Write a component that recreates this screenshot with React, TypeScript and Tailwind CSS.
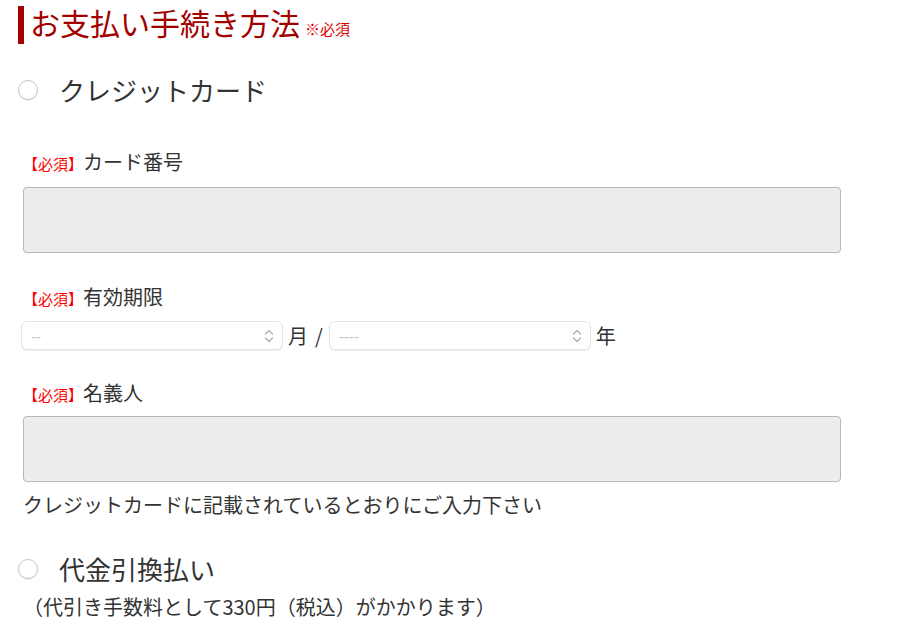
import React from 'react';

const jp = { fontFamily: '"Noto Sans CJK JP", "Noto Sans", sans-serif' };

function Radio({ label }: { label: string }) {
  return (
    <label className="flex h-[40px] items-center pl-[18px]">
      <span className="h-[20px] w-[20px] rounded-full border border-[#c6c6c6] bg-white shadow-[0_1px_1px_rgba(0,0,0,0.08)]" />
      <span className="ml-[21px] text-[26px] leading-[40px] text-[#333]">{label}</span>
    </label>
  );
}

function Label({ text, className }: { text: string; className: string }) {
  return (
    <div className={`h-[28px] overflow-hidden pl-[23px] text-[20px] leading-[28px] text-[#333] ${className}`}>
      <span className="text-[15px] leading-[28px] text-[#ff0000]">【必須】</span>
      {text}
    </div>
  );
}

function Select({ placeholder }: { placeholder: string }) {
  return (
    <div className="relative h-[29px] w-[262px]">
      <select
        className="block h-[29px] w-full appearance-none rounded-[6px] border border-[#e4e4e4] bg-white pl-[9px] text-[15px] text-[#c4c4c4] shadow-[0_1px_1px_rgba(0,0,0,0.07)] outline-none"
        style={{ fontFamily: '"Liberation Sans", sans-serif' }}
      >
        <option>{placeholder}</option>
      </select>
      <svg
        className="pointer-events-none absolute right-[9px] top-[8px]"
        width="10"
        height="14"
        viewBox="0 0 10 14"
        fill="none"
        stroke="#b0b0b0"
        strokeWidth="1.4"
        strokeLinecap="round"
        strokeLinejoin="round"
      >
        <path d="M1.5 5 L5 1.5 L8.5 5" />
        <path d="M1.5 9 L5 12.5 L8.5 9" />
      </svg>
    </div>
  );
}

export default function App() {
  return (
    <div className="h-[635px] w-[924px] overflow-hidden bg-white" style={jp}>
      <div className="ml-[18px] mt-[6px] flex h-[38px] items-center">
        <span className="h-full w-[6px] bg-[#a30000]" />
        <h1 className="ml-[6px] text-[30px] leading-[38px] font-normal text-[#a30000]">
          お支払い手続き方法
          <span className="ml-[5px] text-[15px] text-[#e00000]">※必須</span>
        </h1>
      </div>

      <div className="mt-[26px]">
        <Radio label="クレジットカード" />
      </div>

      <Label text="カード番号" className="mt-[38px]" />
      <div className="ml-[23px] mt-[11px] h-[66px] w-[818px] rounded-[4px] border border-[#b8b8b8] bg-[#ededed]" />

      <Label text="有効期限" className="mt-[30px]" />
      <div className="mt-[10px] flex h-[29px] items-center pl-[21px] text-[20px] leading-[29px] text-[#333]">
        <Select placeholder="--" />
        <span className="ml-[5px]">月</span>
        <span className="ml-[7px] mr-[6px]">/</span>
        <Select placeholder="----" />
        <span className="ml-[5px]">年</span>
      </div>

      <Label text="名義人" className="mt-[29px]" />
      <div className="ml-[23px] mt-[9px] h-[66px] w-[818px] rounded-[4px] border border-[#b8b8b8] bg-[#ededed]" />
      <p className="mt-[9px] pl-[23px] text-[20px] leading-[28px] text-[#333]">
        クレジットカードに記載されているとおりにご入力下さい
      </p>

      <div className="mt-[30px]">
        <Radio label="代金引換払い" />
      </div>
      <p className="mt-[4px] pl-[23px] text-[20px] leading-[28px] text-[#333]">
        （代引き手数料として330円（税込）がかかります）
      </p>
    </div>
  );
}
